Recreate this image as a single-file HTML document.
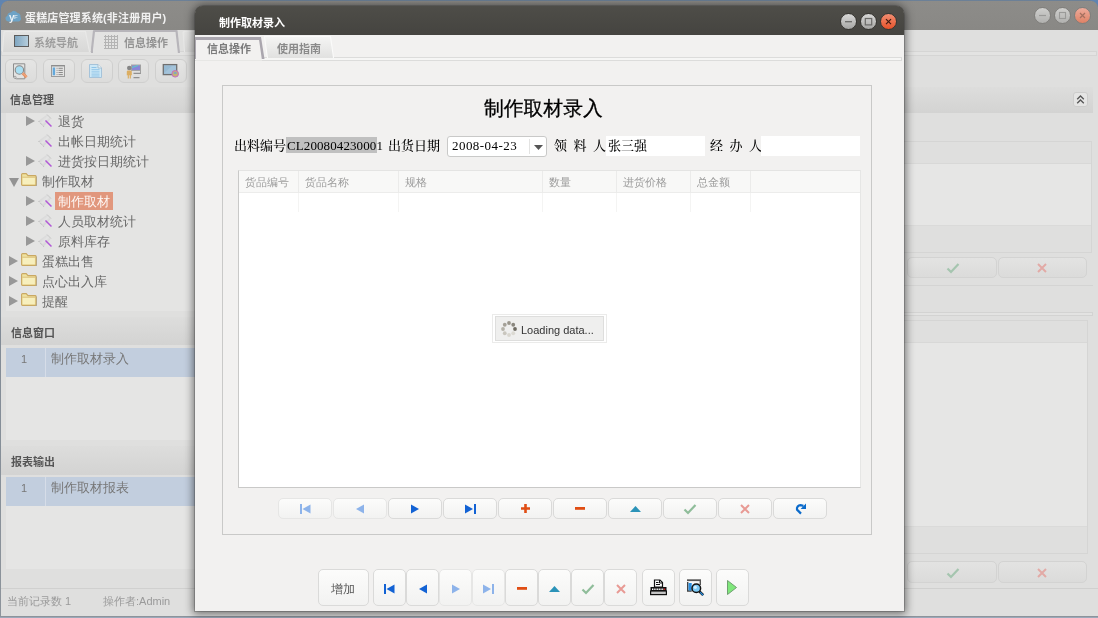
<!DOCTYPE html>
<html lang="zh-CN">
<head>
<meta charset="utf-8">
<title>蛋糕店管理系统</title>
<style>
*{box-sizing:border-box;margin:0;padding:0}
html,body{width:1098px;height:618px;overflow:hidden}
body{background:linear-gradient(#5f84b1,#7d90aa 30%,#9ba8b9);font-family:"Liberation Sans","WenQuanYi Zen Hei","Noto Sans CJK SC",sans-serif;font-size:13px;color:#6a6a6a;position:relative}
#root{position:absolute;left:0;top:0;width:1098px;height:618px;will-change:transform}
#root div,#root svg{position:absolute}
svg{overflow:visible}
.t{white-space:nowrap;line-height:16px}
.b{white-space:nowrap;line-height:16px;font-family:"Liberation Sans","Noto Sans CJK SC",sans-serif;font-weight:bold;font-size:11px}
.s{white-space:nowrap;line-height:16px;font-family:"Liberation Serif","Noto Serif CJK SC",serif;color:#000;font-size:13px;font-weight:500}
.ar{width:0;height:0;border-left:9px solid #989898;border-top:5px solid transparent;border-bottom:5px solid transparent}
.ad{width:0;height:0;border-top:9px solid #939393;border-left:5px solid transparent;border-right:5px solid transparent}
.tb{border:1px solid #cfcfce;border-radius:6px;background:linear-gradient(#e5e5e4,#dcdcdb)}
.nb{border:1px solid #dadad9;border-radius:5px;background:linear-gradient(#fcfcfb,#f2f2f1)}
.rb{border:1px solid #d3d3d2;border-radius:5px;background:linear-gradient(#e3e3e2,#dbdbda)}
</style>
</head>
<body>
<div id="root">
<div style="left:1px;top:1px;width:1097px;height:615px;background:#dfdfde;border-radius:10px 10px 0 0;box-shadow:0 0 0 1px rgba(125,125,120,.45)"></div>
<div style="left:1px;top:1px;width:1097px;height:29px;background:linear-gradient(#8d8c89,#898885);border-radius:7px 7px 0 0"></div>
<svg style="left:5px;top:9px" width="17" height="14" viewBox="0 0 17 14"><path d="M3 12.5a3 3 0 0 1-.6-5.8A3.2 3.2 0 0 1 6 3.6a3.6 3.6 0 0 1 6.4.5A3.2 3.2 0 0 1 15.5 8a2.8 2.8 0 0 1-2 4.5z" fill="#6ea3c6"/><text x="4" y="11.5" font-family="Liberation Sans,sans-serif" font-weight="bold" font-size="10" fill="#eef3f7">y</text><text x="9" y="9.5" font-family="Liberation Sans,sans-serif" font-weight="bold" font-size="6" fill="#cfe0ec">F</text></svg>
<div class="b" style="left:25px;top:10px;color:#f1f1f1;letter-spacing:.15px">蛋糕店管理系统(非注册用户)</div>
<div style="left:1033.5px;top:7px;width:17px;height:17px;background:linear-gradient(#cfcfcd,#b1b1af);border-radius:50%;border:1px solid #7f7e7b"></div>
<div style="left:1053.5px;top:7px;width:17px;height:17px;background:linear-gradient(#cfcfcd,#b1b1af);border-radius:50%;border:1px solid #7f7e7b"></div>
<div style="left:1073.5px;top:7px;width:17px;height:17px;background:linear-gradient(#edab9b,#df8266);border-radius:50%;border:1px solid #7f7e7b"></div>
<svg style="left:1035px;top:8px" width="55" height="15" viewBox="0 0 55 15"><path d="M4 7.5h7" stroke="#9a9a98" stroke-width="1.2"/><rect x="24.5" y="4.5" width="6" height="6" fill="none" stroke="#9a9a98" stroke-width="1.1"/><path d="M45 5l5 5M50 5l-5 5" stroke="#a4705f" stroke-width="1.2"/></svg>
<div style="left:1px;top:51px;width:1096px;height:5px;border:1px solid #d5d5d4;background:#e3e3e2"></div>
<div style="left:2px;top:31px;width:88px;height:21px;background:#e9e9e8;border-radius:4px 4px 0 0;clip-path:polygon(1.500px 0,84px 0,88px 100%,0 100%)"></div>
<div style="left:3px;top:32px;width:86px;height:20px;background:linear-gradient(#e4e4e3,#d8d8d7);border-radius:3px 3px 0 0;clip-path:polygon(1.500px 0,82px 0,86px 100%,0 100%)"></div>
<div style="left:14px;top:35px;width:15px;height:12px;border:1px solid #5c5c5c;background:linear-gradient(90deg,#7fa6c1,#b5cddc)"></div>
<div class="b" style="left:34px;top:35px;color:#9d9d9d">系统导航</div>
<div style="left:90.5px;top:30px;width:89.5px;height:23px;background:#b7b5ba;border-radius:4px 4px 0 0;clip-path:polygon(2.500px 0,87px 0,89.500px 100%,0 100%)"></div>
<div style="left:92.5px;top:32px;width:85.5px;height:22px;background:#e3e3e2;border-radius:2px 2px 0 0;clip-path:polygon(2.500px 0,83px 0,85.500px 100%,0 100%)"></div>
<svg style="left:104px;top:35px" width="14" height="14" viewBox="0 0 14 14"><path d="M1.5 0v14M4.5 0v14M7.5 0v14M10.5 0v14M13.5 0v14M0 1.5h14M0 4.5h14M0 7.5h14M0 10.5h14M0 13.5h14" stroke="#b4b4b4" stroke-width="1"/></svg>
<div class="b" style="left:124px;top:35px;color:#939393">信息操作</div>
<div style="left:181px;top:31px;width:88px;height:21px;background:#e9e9e8;border-radius:4px 4px 0 0;clip-path:polygon(1.500px 0,84px 0,88px 100%,3px 100%)"></div>
<div style="left:182px;top:32px;width:86px;height:20px;background:linear-gradient(#e5e5e4,#d9d9d8);border-radius:3px 3px 0 0;clip-path:polygon(1.500px 0,82px 0,86px 100%,3px 100%)"></div>
<div class="tb" style="left:5px;top:59px;width:32px;height:24px;"></div>
<div class="tb" style="left:43px;top:59px;width:32px;height:24px;"></div>
<div class="tb" style="left:81px;top:59px;width:32px;height:24px;"></div>
<div class="tb" style="left:118px;top:59px;width:31px;height:24px;"></div>
<div class="tb" style="left:155px;top:59px;width:32px;height:24px;"></div>
<svg style="left:12px;top:62.5px" width="16" height="17" viewBox="0 0 16 17"><path d="M1.500 .8h11.300v15H4.500a2.200 2.200 0 0 1-2.200-1.600L1.500 14z" fill="#e3e3e2" stroke="#8e8e8e" stroke-width="1"/><circle cx="3" cy="14.300" r="1.100" fill="#f3f3f3" stroke="#8e8e8e" stroke-width=".8"/><circle cx="7.400" cy="7" r="4.200" fill="#a8def2" stroke="#8a8a8a" stroke-width="1.100"/><path d="M10.700 10.300l3.900 3.900" stroke="#e78d5d" stroke-width="2.700"/><path d="M10.900 10.300l3.700 3.700" stroke="#f5c7a8" stroke-width=".7"/></svg>
<svg style="left:50.5px;top:65px" width="14" height="12" viewBox="0 0 14 12"><rect x=".5" y=".5" width="13" height="11" fill="#e4e4e3" stroke="#9b9b9b"/><path d="M.5 .8h13" stroke="#8a8a8a" stroke-width="1.200"/><rect x="1.700" y="2.500" width="2.400" height="7.800" fill="#62a8dc"/><path d="M5.600 3.300h.9M7.500 3.300h4.300M5.600 5.400h.9M7.500 5.400h4.300M5.600 7.500h.9M7.500 7.500h4.300M5.600 9.600h.9M7.500 9.600h4.300" stroke="#8a8a8a" stroke-width="1"/></svg>
<svg style="left:88.5px;top:63.5px" width="13" height="14" viewBox="0 0 13 14"><path d="M.5.500h8.500l3.500 3.500v9.500H.500z" fill="#cde8f6" stroke="#a5c3da"/><path d="M9 .5v3.500h3.500" fill="#e6f2f9" stroke="#9fb4c4" stroke-width=".8"/><path d="M2.500 3.500h5M2.500 5.700h8M2.500 7.900h8M2.500 10.100h8M2.500 12h8" stroke="#8fc4e8" stroke-width="1"/></svg>
<svg style="left:126px;top:63.5px" width="16" height="15" viewBox="0 0 16 15"><rect x="5.500" y="1" width="9" height="5.500" fill="#8a86d8" stroke="#a6a6a6" stroke-width="1"/><path d="M6 3.500l6-2" stroke="#5ad0c8" stroke-width="1"/><path d="M14.500 1v9" stroke="#a0a0a0"/><path d="M7.500 9.300h7M7.500 13.600h6" stroke="#909090" stroke-width="1.300"/><circle cx="3.300" cy="4" r="2.300" fill="#858585"/><path d="M.8 7.600a1.200 1.200 0 0 1 1.200-1.200h2.600a1.200 1.200 0 0 1 1.200 1.200v3.600H4.900v3.300H3.700v-3.300h-.8v3.300H1.700v-3.300H.8z" fill="#dcae62"/></svg>
<svg style="left:162px;top:63px" width="19" height="17" viewBox="0 0 19 17"><rect x="1.300" y="1.600" width="13.400" height="10" fill="#a3c3da" stroke="#6f6f6f" stroke-width="1.300"/><path d="M2 3l8 0-8 7z" fill="#8fb4cf" opacity=".6"/><circle cx="13.200" cy="10.800" r="3.300" fill="#c6b274" stroke="#c56cc6" stroke-width="1"/><path d="M11.500 10.800a1.700 1.700 0 0 1 3.400 0" fill="#6fa5d0"/></svg>
<div style="left:1px;top:87px;width:194px;height:26px;background:linear-gradient(#dddddc,#d3d3d2)"></div>
<div class="b" style="left:10px;top:92px;color:#555">信息管理</div>
<div style="left:6px;top:113px;width:189px;height:198px;background:#e4e4e3"></div>
<div class="ar" style="left:26px;top:116px;width:0px;height:0px;"></div>
<svg style="left:38px;top:114px" width="14" height="14" viewBox="0 0 14 14"><defs><linearGradient id="wg" x1="0" y1="0" x2="1" y2="1"><stop offset="0" stop-color="#c6c6c6"/><stop offset=".5" stop-color="#e4e4e4"/><stop offset="1" stop-color="#bdbdbd"/></linearGradient></defs><path d="M9 .5l4 4-7.500 8L.500 7z" fill="url(#wg)"/><path d="M9 .5l4 4" stroke="#bcbcbc" stroke-width=".8"/><path d="M.8 7.300l5 5.400" stroke="#a9a9a9" stroke-width="1" stroke-dasharray="1 1.200"/><path d="M7.500 6.500l6 6" stroke="#b158d6" stroke-width="1.500"/></svg>
<div class="t" style="left:58px;top:114px;color:#686868">退货</div>
<svg style="left:38px;top:134px" width="14" height="14" viewBox="0 0 14 14"><defs><linearGradient id="wg" x1="0" y1="0" x2="1" y2="1"><stop offset="0" stop-color="#c6c6c6"/><stop offset=".5" stop-color="#e4e4e4"/><stop offset="1" stop-color="#bdbdbd"/></linearGradient></defs><path d="M9 .5l4 4-7.500 8L.500 7z" fill="url(#wg)"/><path d="M9 .5l4 4" stroke="#bcbcbc" stroke-width=".8"/><path d="M.8 7.300l5 5.400" stroke="#a9a9a9" stroke-width="1" stroke-dasharray="1 1.200"/><path d="M7.500 6.500l6 6" stroke="#b158d6" stroke-width="1.500"/></svg>
<div class="t" style="left:58px;top:134px;color:#686868">出帐日期统计</div>
<div class="ar" style="left:26px;top:156px;width:0px;height:0px;"></div>
<svg style="left:38px;top:154px" width="14" height="14" viewBox="0 0 14 14"><defs><linearGradient id="wg" x1="0" y1="0" x2="1" y2="1"><stop offset="0" stop-color="#c6c6c6"/><stop offset=".5" stop-color="#e4e4e4"/><stop offset="1" stop-color="#bdbdbd"/></linearGradient></defs><path d="M9 .5l4 4-7.500 8L.500 7z" fill="url(#wg)"/><path d="M9 .5l4 4" stroke="#bcbcbc" stroke-width=".8"/><path d="M.8 7.300l5 5.400" stroke="#a9a9a9" stroke-width="1" stroke-dasharray="1 1.200"/><path d="M7.500 6.500l6 6" stroke="#b158d6" stroke-width="1.500"/></svg>
<div class="t" style="left:58px;top:154px;color:#686868">进货按日期统计</div>
<div class="ad" style="left:8.5px;top:177.5px;width:0px;height:0px;"></div>
<svg style="left:21px;top:173px" width="16" height="13" viewBox="0 0 16 13"><path d="M2 3.500h14v9.500H2z" fill="#a8a8a8"/><path d="M.6 1.600a1 1 0 0 1 1-1h3.600l1.800 2h7.200a.8.800 0 0 1 .8.800v8.200a.8.800 0 0 1-.8.800H1.400a.8.800 0 0 1-.8-.8z" fill="#efe3a0" stroke="#c9a862" stroke-width="1.100"/><path d="M1.800 5h12v6.200h-12z" fill="#f7efbd"/><path d="M1.200 4.200h13" stroke="#d9bd78" stroke-width=".8"/></svg>
<div class="t" style="left:42px;top:174px;color:#686868">制作取材</div>
<div class="ar" style="left:26px;top:196px;width:0px;height:0px;"></div>
<svg style="left:38px;top:194px" width="14" height="14" viewBox="0 0 14 14"><defs><linearGradient id="wg" x1="0" y1="0" x2="1" y2="1"><stop offset="0" stop-color="#c6c6c6"/><stop offset=".5" stop-color="#e4e4e4"/><stop offset="1" stop-color="#bdbdbd"/></linearGradient></defs><path d="M9 .5l4 4-7.500 8L.500 7z" fill="url(#wg)"/><path d="M9 .5l4 4" stroke="#bcbcbc" stroke-width=".8"/><path d="M.8 7.300l5 5.400" stroke="#a9a9a9" stroke-width="1" stroke-dasharray="1 1.200"/><path d="M7.500 6.500l6 6" stroke="#b158d6" stroke-width="1.500"/></svg>
<div style="left:55px;top:192px;width:58px;height:18px;background:#e1977d"></div>
<div class="t" style="left:58px;top:194px;color:#fdf6f3">制作取材</div>
<div class="ar" style="left:26px;top:216px;width:0px;height:0px;"></div>
<svg style="left:38px;top:214px" width="14" height="14" viewBox="0 0 14 14"><defs><linearGradient id="wg" x1="0" y1="0" x2="1" y2="1"><stop offset="0" stop-color="#c6c6c6"/><stop offset=".5" stop-color="#e4e4e4"/><stop offset="1" stop-color="#bdbdbd"/></linearGradient></defs><path d="M9 .5l4 4-7.500 8L.500 7z" fill="url(#wg)"/><path d="M9 .5l4 4" stroke="#bcbcbc" stroke-width=".8"/><path d="M.8 7.300l5 5.400" stroke="#a9a9a9" stroke-width="1" stroke-dasharray="1 1.200"/><path d="M7.500 6.500l6 6" stroke="#b158d6" stroke-width="1.500"/></svg>
<div class="t" style="left:58px;top:214px;color:#686868">人员取材统计</div>
<div class="ar" style="left:26px;top:236px;width:0px;height:0px;"></div>
<svg style="left:38px;top:234px" width="14" height="14" viewBox="0 0 14 14"><defs><linearGradient id="wg" x1="0" y1="0" x2="1" y2="1"><stop offset="0" stop-color="#c6c6c6"/><stop offset=".5" stop-color="#e4e4e4"/><stop offset="1" stop-color="#bdbdbd"/></linearGradient></defs><path d="M9 .5l4 4-7.500 8L.500 7z" fill="url(#wg)"/><path d="M9 .5l4 4" stroke="#bcbcbc" stroke-width=".8"/><path d="M.8 7.300l5 5.400" stroke="#a9a9a9" stroke-width="1" stroke-dasharray="1 1.200"/><path d="M7.500 6.500l6 6" stroke="#b158d6" stroke-width="1.500"/></svg>
<div class="t" style="left:58px;top:234px;color:#686868">原料库存</div>
<div class="ar" style="left:9px;top:256px;width:0px;height:0px;"></div>
<svg style="left:21px;top:253px" width="16" height="13" viewBox="0 0 16 13"><path d="M2 3.500h14v9.500H2z" fill="#a8a8a8"/><path d="M.6 1.600a1 1 0 0 1 1-1h3.600l1.800 2h7.200a.8.800 0 0 1 .8.800v8.200a.8.800 0 0 1-.8.800H1.400a.8.800 0 0 1-.8-.8z" fill="#efe3a0" stroke="#c9a862" stroke-width="1.100"/><path d="M1.800 5h12v6.200h-12z" fill="#f7efbd"/><path d="M1.200 4.200h13" stroke="#d9bd78" stroke-width=".8"/></svg>
<div class="t" style="left:42px;top:254px;color:#686868">蛋糕出售</div>
<div class="ar" style="left:9px;top:276px;width:0px;height:0px;"></div>
<svg style="left:21px;top:273px" width="16" height="13" viewBox="0 0 16 13"><path d="M2 3.500h14v9.500H2z" fill="#a8a8a8"/><path d="M.6 1.600a1 1 0 0 1 1-1h3.600l1.800 2h7.200a.8.800 0 0 1 .8.800v8.200a.8.800 0 0 1-.8.800H1.400a.8.800 0 0 1-.8-.8z" fill="#efe3a0" stroke="#c9a862" stroke-width="1.100"/><path d="M1.800 5h12v6.200h-12z" fill="#f7efbd"/><path d="M1.200 4.200h13" stroke="#d9bd78" stroke-width=".8"/></svg>
<div class="t" style="left:42px;top:274px;color:#686868">点心出入库</div>
<div class="ar" style="left:9px;top:296px;width:0px;height:0px;"></div>
<svg style="left:21px;top:293px" width="16" height="13" viewBox="0 0 16 13"><path d="M2 3.500h14v9.500H2z" fill="#a8a8a8"/><path d="M.6 1.600a1 1 0 0 1 1-1h3.600l1.800 2h7.200a.8.800 0 0 1 .8.800v8.200a.8.800 0 0 1-.8.800H1.400a.8.800 0 0 1-.8-.8z" fill="#efe3a0" stroke="#c9a862" stroke-width="1.100"/><path d="M1.800 5h12v6.200h-12z" fill="#f7efbd"/><path d="M1.200 4.200h13" stroke="#d9bd78" stroke-width=".8"/></svg>
<div class="t" style="left:42px;top:294px;color:#686868">提醒</div>
<div style="left:1px;top:317px;width:194px;height:28px;background:linear-gradient(#dddddc,#d3d3d2)"></div>
<div class="b" style="left:11px;top:325px;color:#555">信息窗口</div>
<div style="left:6px;top:348px;width:189px;height:92px;background:#e5e5e4"></div>
<div style="left:6px;top:348px;width:189px;height:29px;background:#c2cede"></div>
<div style="left:45px;top:348px;width:1px;height:29px;background:#d6dde8"></div>
<div class="t" style="left:21px;top:351px;color:#777;font-size:11px">1</div>
<div class="t" style="left:51px;top:351px;color:#777">制作取材录入</div>
<div style="left:1px;top:446px;width:194px;height:29px;background:linear-gradient(#dddddc,#d3d3d2)"></div>
<div class="b" style="left:11px;top:454px;color:#555">报表输出</div>
<div style="left:6px;top:477px;width:189px;height:92px;background:#e5e5e4"></div>
<div style="left:6px;top:477px;width:189px;height:29px;background:#c2cede"></div>
<div style="left:45px;top:477px;width:1px;height:29px;background:#d6dde8"></div>
<div class="t" style="left:21px;top:480px;color:#777;font-size:11px">1</div>
<div class="t" style="left:51px;top:480px;color:#777">制作取材报表</div>
<div style="left:1px;top:588px;width:1097px;height:1px;background:#d0d0cf"></div>
<div class="t" style="left:7px;top:593px;color:#9a9a9a;font-size:11px">当前记录数 1</div>
<div class="t" style="left:103px;top:593px;color:#9a9a9a;font-size:11px">操作者:Admin</div>
<div style="left:200px;top:87px;width:893px;height:26px;background:linear-gradient(#dddddc,#d3d3d2)"></div>
<div style="left:1073px;top:92px;width:15px;height:15px;border:1px solid #cdcdcc;border-radius:3px;background:#e5e5e4"></div>
<svg style="left:1075px;top:94px" width="11" height="11" viewBox="0 0 11 11"><path d="M2.2 5.2L5.5 2l3.3 3.2M2.2 9.2L5.5 6l3.3 3.2" fill="none" stroke="#555" stroke-width="1.3"/></svg>
<div style="left:200px;top:141px;width:892px;height:112px;border:1px solid #d5d5d4;background:#dfdfde"></div>
<div style="left:201px;top:164px;width:890px;height:61px;background:#e6e6e5"></div>
<div style="left:201px;top:163px;width:890px;height:1px;background:#d8d8d7"></div>
<div style="left:201px;top:225px;width:890px;height:1px;background:#dadad9"></div>
<div class="rb" style="left:907px;top:257px;width:90px;height:21px;"></div>
<div class="rb" style="left:998px;top:257px;width:89px;height:21px;"></div>
<svg style="left:946px;top:262px" width="14" height="12" viewBox="0 0 14 12"><path d="M1.5 6.5L5 10l7.5-8" fill="none" stroke="#a5c5af" stroke-width="2.2"/></svg>
<svg style="left:1036px;top:262px" width="12" height="12" viewBox="0 0 12 12"><path d="M2 2l8 8M10 2l-8 8" fill="none" stroke="#e2aaa6" stroke-width="2"/></svg>
<div style="left:200px;top:285px;width:893px;height:1px;background:#d4d4d3"></div>
<div style="left:200px;top:312px;width:893px;height:4px;border:1px solid #d3d3d2;background:#e3e3e2"></div>
<div style="left:200px;top:320px;width:888px;height:234px;border:1px solid #d5d5d4;background:#dfdfde"></div>
<div style="left:201px;top:343px;width:886px;height:183px;background:#e6e6e5"></div>
<div style="left:201px;top:342px;width:886px;height:1px;background:#d8d8d7"></div>
<div style="left:201px;top:526px;width:886px;height:1px;background:#dadad9"></div>
<div class="rb" style="left:907px;top:561px;width:90px;height:22px;"></div>
<div class="rb" style="left:998px;top:561px;width:89px;height:22px;"></div>
<svg style="left:946px;top:567px" width="14" height="12" viewBox="0 0 14 12"><path d="M1.5 6.5L5 10l7.5-8" fill="none" stroke="#a5c5af" stroke-width="2.2"/></svg>
<svg style="left:1036px;top:567px" width="12" height="12" viewBox="0 0 12 12"><path d="M2 2l8 8M10 2l-8 8" fill="none" stroke="#e2aaa6" stroke-width="2"/></svg>
<div style="left:195px;top:6px;width:709px;height:605px;background:#f2f1f0;border-radius:9px 9px 0 0;box-shadow:0 0 0 1px rgba(50,50,50,.28),0 1px 9px 2px rgba(0,0,0,.5)"></div>
<div style="left:195px;top:6px;width:709px;height:29px;background:linear-gradient(#4e4d48,#454440);border-radius:7px 7px 0 0"></div>
<div class="b" style="left:219px;top:15px;color:#fff">制作取材录入</div>
<div style="left:840.0px;top:13px;width:17px;height:17px;background:linear-gradient(#d8d8d7,#a6a6a4);border-radius:50%;border:1px solid #373632"></div>
<div style="left:860.0px;top:13px;width:17px;height:17px;background:linear-gradient(#d8d8d7,#a6a6a4);border-radius:50%;border:1px solid #373632"></div>
<div style="left:880.0px;top:13px;width:17px;height:17px;background:linear-gradient(#f18e72,#e6522a);border-radius:50%;border:1px solid #373632"></div>
<svg style="left:841px;top:14px" width="55" height="15" viewBox="0 0 55 15"><path d="M4 7.700h7" stroke="#6a6a68" stroke-width="1.300"/><rect x="24.300" y="4.500" width="6.400" height="6.400" fill="none" stroke="#6a6a68" stroke-width="1.200"/><path d="M45 5.200l5 5M50 5.200l-5 5" stroke="#3d1a10" stroke-width="1.200"/></svg>
<div style="left:195px;top:57px;width:707px;height:4px;border:1px solid #dcdcdb;border-left:0;background:#f6f6f5"></div>
<div style="left:264px;top:36px;width:70px;height:22px;background:#fbfbfa;clip-path:polygon(0 0,67px 0,70px 100%,3px 100%)"></div>
<div style="left:265px;top:37px;width:68px;height:21px;background:linear-gradient(#f4f4f3,#e1e1e0);clip-path:polygon(0 0,65px 0,68px 100%,3px 100%)"></div>
<div class="b" style="left:277px;top:41px;color:#8a8a8a">使用指南</div>
<div style="left:195px;top:37px;width:70px;height:22px;background:#aaa6ae;clip-path:polygon(0 0,66px 0,69.500px 100%,0 100%)"></div>
<div style="left:196px;top:39.5px;width:67px;height:21px;background:#f2f1f0;clip-path:polygon(0 0,63px 0,66px 100%,0 100%)"></div>
<div class="b" style="left:207px;top:41px;color:#7b7b7b">信息操作</div>
<div style="left:222px;top:85px;width:650px;height:450px;border:1px solid #c9c9c8"></div>
<div class="t" style="left:484px;top:95.5px;color:#000;-webkit-text-stroke:.3px #000;font-size:19.800px;line-height:24px;font-family:'Liberation Sans','WenQuanYi Zen Hei','Noto Sans CJK SC',sans-serif">制作取材录入</div>
<div class="s" style="left:234px;top:138px;">出料编号</div>
<div style="left:286px;top:137px;width:91px;height:16px;background:#c0c0c0"></div>
<div class="s" style="left:287px;top:138px;letter-spacing:.1px">CL200804230001</div>
<div class="s" style="left:388px;top:138px;">出货日期</div>
<div style="left:447px;top:136px;width:100px;height:21px;background:#fff;border:1px solid #c9c9c8;border-radius:3px"></div>
<div class="s" style="left:452px;top:138px;letter-spacing:.45px">2008-04-23</div>
<div style="left:529px;top:139px;width:1px;height:15px;background:#e3e3e2"></div>
<svg style="left:534px;top:145px" width="9" height="5" viewBox="0 0 9 5"><path d="M0 0h9L4.5 5z" fill="#555"/></svg>
<div class="s" style="left:554px;top:138px;word-spacing:3.250px">领 料 人</div>
<div style="left:606px;top:136px;width:99px;height:20px;background:#fff"></div>
<div class="s" style="left:608px;top:138px;">张三强</div>
<div class="s" style="left:710px;top:138px;word-spacing:3.250px">经 办 人</div>
<div style="left:761px;top:136px;width:99px;height:20px;background:#fff"></div>
<div style="left:238px;top:170px;width:623px;height:318px;border:1px solid #c9c9c8;border-top-color:#e4e4e3;border-right-color:#e6e6e5;background:#fff"></div>
<div style="left:239px;top:171px;width:621px;height:22px;background:#f8f8f7;border-bottom:1px solid #ececeb"></div>
<div class="t" style="left:245px;top:174px;color:#9c9c9c;font-size:11px">货品编号</div>
<div style="left:298px;top:171px;width:1px;height:41px;background:linear-gradient(#ebebea 53%,#f4f4f3 53%)"></div>
<div class="t" style="left:305px;top:174px;color:#9c9c9c;font-size:11px">货品名称</div>
<div style="left:398px;top:171px;width:1px;height:41px;background:linear-gradient(#ebebea 53%,#f4f4f3 53%)"></div>
<div class="t" style="left:405px;top:174px;color:#9c9c9c;font-size:11px">规格</div>
<div style="left:542px;top:171px;width:1px;height:41px;background:linear-gradient(#ebebea 53%,#f4f4f3 53%)"></div>
<div class="t" style="left:549px;top:174px;color:#9c9c9c;font-size:11px">数量</div>
<div style="left:616px;top:171px;width:1px;height:41px;background:linear-gradient(#ebebea 53%,#f4f4f3 53%)"></div>
<div class="t" style="left:623px;top:174px;color:#9c9c9c;font-size:11px">进货价格</div>
<div style="left:690px;top:171px;width:1px;height:41px;background:linear-gradient(#ebebea 53%,#f4f4f3 53%)"></div>
<div class="t" style="left:697px;top:174px;color:#9c9c9c;font-size:11px">总金额</div>
<div style="left:750px;top:171px;width:1px;height:41px;background:linear-gradient(#ebebea 53%,#f4f4f3 53%)"></div>
<div style="left:492px;top:314px;width:115px;height:29px;border:1px solid #ebebea;background:#fff"></div>
<div style="left:495px;top:316px;width:109px;height:25px;border:1px solid #dededd;background:#efefee"></div>
<svg style="left:501px;top:320.5px" width="16" height="16" viewBox="0 0 16 16"><circle cx="14.00" cy="8.00" r="1.900" fill="#6f6c63"/><circle cx="12.24" cy="12.24" r="1.900" fill="#dcdad3"/><circle cx="8.00" cy="14.00" r="1.900" fill="#d9d6cf"/><circle cx="3.76" cy="12.24" r="1.900" fill="#c9c6be"/><circle cx="2.00" cy="8.00" r="1.900" fill="#b5b2a9"/><circle cx="3.76" cy="3.76" r="1.900" fill="#a5a198"/><circle cx="8.00" cy="2.00" r="1.900" fill="#9a968c"/><circle cx="12.24" cy="3.76" r="1.900" fill="#8a877e"/></svg>
<div class="t" style="left:521px;top:322px;color:#333;font-size:11px;font-family:'Liberation Sans',sans-serif">Loading data...</div>
<div class="nb" style="left:278px;top:498px;width:54px;height:21px;border-color:#e6e6e5"></div>
<svg style="left:299.5px;top:503.5px" width="11" height="10" viewBox="0 0 11 10"><path d="M0 0h2v10H0z" fill="#8db3ea"/><path d="M10.5 0.5v9L2.5 5z" fill="#8db3ea"/></svg>
<div class="nb" style="left:333px;top:498px;width:54px;height:21px;border-color:#e6e6e5"></div>
<svg style="left:356.0px;top:503.5px" width="8" height="10" viewBox="0 0 8 10"><path d="M8 0.5v9L0 5z" fill="#8db3ea"/></svg>
<div class="nb" style="left:388px;top:498px;width:54px;height:21px;"></div>
<svg style="left:411.0px;top:503.5px" width="8" height="10" viewBox="0 0 8 10"><path d="M0 0.5v9l8-4.5z" fill="#1262d4"/></svg>
<div class="nb" style="left:443px;top:498px;width:54px;height:21px;"></div>
<svg style="left:464.5px;top:503.5px" width="11" height="10" viewBox="0 0 11 10"><path d="M9 0h2v10H9z" fill="#1262d4"/><path d="M0 0.5v9l8-4.5z" fill="#1262d4"/></svg>
<div class="nb" style="left:498px;top:498px;width:54px;height:21px;"></div>
<svg style="left:520.5px;top:504.0px" width="9" height="9" viewBox="0 0 9 9"><path d="M3.200 0h2.600v3.200H9v2.600H5.800V9H3.200V5.800H0V3.200h3.200z" fill="#e04e14"/></svg>
<div class="nb" style="left:553px;top:498px;width:54px;height:21px;"></div>
<svg style="left:575.0px;top:507.0px" width="10" height="3" viewBox="0 0 10 3"><path d="M0 0h10v2.800H0z" fill="#e04e14"/></svg>
<div class="nb" style="left:608px;top:498px;width:54px;height:21px;"></div>
<svg style="left:629.5px;top:505.5px" width="11" height="6" viewBox="0 0 11 6"><path d="M0 6L5.5 0 11 6z" fill="#2b93b8"/></svg>
<div class="nb" style="left:663px;top:498px;width:54px;height:21px;"></div>
<svg style="left:683.0px;top:502.5px" width="14" height="12" viewBox="0 0 14 12"><path d="M1.5 6.5L5 10l7.5-8" fill="none" stroke="#8fbd9a" stroke-width="2.2"/></svg>
<div class="nb" style="left:718px;top:498px;width:54px;height:21px;"></div>
<svg style="left:739.0px;top:502.5px" width="12" height="12" viewBox="0 0 12 12"><path d="M2 2l8 8M10 2l-8 8" fill="none" stroke="#e89a94" stroke-width="2"/></svg>
<div class="nb" style="left:773px;top:498px;width:54px;height:21px;"></div>
<svg style="left:794.5px;top:503.0px" width="11" height="11" viewBox="0 0 11 11"><path d="M6 10.600L2 6.600A3.600 3.600 0 0 1 5.500 2.200L8.500 2.800" fill="none" stroke="#0b6bcb" stroke-width="2.200"/><path d="M11 0.600v5.400H5.600z" fill="#0b6bcb"/></svg>
<div class="nb" style="left:318px;top:569px;width:51px;height:37px;"></div>
<div class="t" style="left:331px;top:581px;color:#555;font-size:12px">增加</div>
<div class="nb" style="left:373px;top:569px;width:33px;height:37px;"></div>
<svg style="left:384.0px;top:583.5px" width="11" height="10" viewBox="0 0 11 10"><path d="M0 0h2v10H0z" fill="#1262d4"/><path d="M10.5 0.5v9L2.5 5z" fill="#1262d4"/></svg>
<div class="nb" style="left:406px;top:569px;width:33px;height:37px;"></div>
<svg style="left:418.5px;top:583.5px" width="8" height="10" viewBox="0 0 8 10"><path d="M8 0.5v9L0 5z" fill="#1262d4"/></svg>
<div class="nb" style="left:439px;top:569px;width:33px;height:37px;border-color:#e6e6e5"></div>
<svg style="left:451.5px;top:583.5px" width="8" height="10" viewBox="0 0 8 10"><path d="M0 0.5v9l8-4.5z" fill="#8db3ea"/></svg>
<div class="nb" style="left:472px;top:569px;width:33px;height:37px;border-color:#e6e6e5"></div>
<svg style="left:483.0px;top:583.5px" width="11" height="10" viewBox="0 0 11 10"><path d="M9 0h2v10H9z" fill="#8db3ea"/><path d="M0 0.5v9l8-4.5z" fill="#8db3ea"/></svg>
<div class="nb" style="left:505px;top:569px;width:33px;height:37px;"></div>
<svg style="left:516.5px;top:587.0px" width="10" height="3" viewBox="0 0 10 3"><path d="M0 0h10v2.800H0z" fill="#e04e14"/></svg>
<div class="nb" style="left:538px;top:569px;width:33px;height:37px;"></div>
<svg style="left:549.0px;top:585.5px" width="11" height="6" viewBox="0 0 11 6"><path d="M0 6L5.5 0 11 6z" fill="#2b93b8"/></svg>
<div class="nb" style="left:571px;top:569px;width:33px;height:37px;"></div>
<svg style="left:580.5px;top:582.5px" width="14" height="12" viewBox="0 0 14 12"><path d="M1.5 6.5L5 10l7.5-8" fill="none" stroke="#8fbd9a" stroke-width="2.2"/></svg>
<div class="nb" style="left:604px;top:569px;width:33px;height:37px;"></div>
<svg style="left:614.5px;top:582.5px" width="12" height="12" viewBox="0 0 12 12"><path d="M2 2l8 8M10 2l-8 8" fill="none" stroke="#e89a94" stroke-width="2"/></svg>
<div class="nb" style="left:642px;top:569px;width:33px;height:37px;"></div>
<div class="nb" style="left:679px;top:569px;width:33px;height:37px;"></div>
<div class="nb" style="left:716px;top:569px;width:33px;height:37px;"></div>
<svg style="left:650px;top:579px" width="17" height="17" viewBox="0 0 17 17"><path d="M4.500 8V1h5.500l2.500 2.500V8z" fill="#fff" stroke="#111" stroke-width="1.200"/><path d="M9.500 1v3h3" fill="none" stroke="#111"/><path d="M6 3.500h2.500M6 5.500h4" stroke="#111" stroke-width="1.200"/><rect x=".5" y="8" width="16" height="4.500" fill="#111"/><path d="M2 10.200h11.500" stroke="#fff" stroke-width="1.400" stroke-dasharray="1.100 0.600"/><rect x="13.800" y="9.500" width="1.400" height="1.400" fill="#e02020"/><rect x=".6" y="12" width="15.800" height="3.600" fill="#c4c4c4" stroke="#111" stroke-width="1.200"/></svg>
<svg style="left:687px;top:579px" width="18" height="18" viewBox="0 0 18 18"><path d="M0 1.200h14" stroke="#555" stroke-width="1.800"/><path d="M.7 3v9h4" fill="none" stroke="#444" stroke-width="1.400"/><path d="M13.300 2v4" stroke="#555" stroke-width="1.400"/><rect x="1.500" y="4" width="3.200" height="7.500" fill="#2a8fe0"/><circle cx="9.300" cy="9.300" r="4.300" fill="#7ccaf6" stroke="#111" stroke-width="1.500"/><circle cx="8.300" cy="8.300" r="1.600" fill="#d8f0fd"/><path d="M12.600 12.600l3.600 3.600" stroke="#111" stroke-width="2.600"/><path d="M13.200 13.200l3 3" stroke="#2a8fe0" stroke-width="1.300"/></svg>
<svg style="left:727px;top:580px" width="10" height="15" viewBox="0 0 10 15"><path d="M.5.500v14l9-7z" fill="#7fe77b" stroke="#6fa070" stroke-width="1"/></svg>
</div>
</body>
</html>
